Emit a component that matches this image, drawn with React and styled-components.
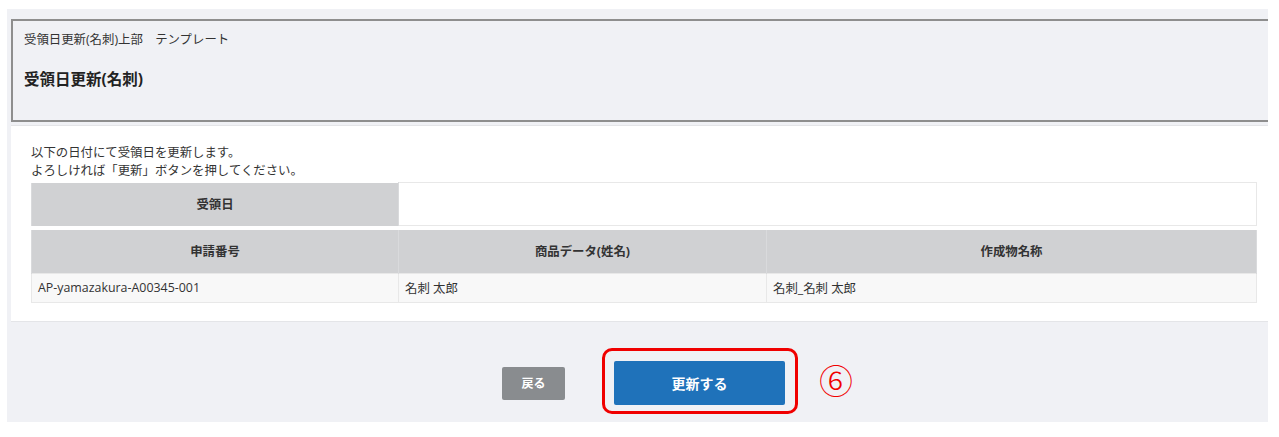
import React from 'react'
import styled, { createGlobalStyle } from 'styled-components'

const GlobalStyle = createGlobalStyle`
  body {
    margin: 0;
    background: #ffffff;
    font-family: "Open Sans", "Noto Sans CJK JP", sans-serif;
    color: #333333;
  }
`

const Page = styled.div`
  padding: 9px 11px 16px 7px;
`
const Frame = styled.div`
  width: 1261px;
  background: #f0f1f5;
  padding-top: 10px;
`
const Header = styled.div`
  margin-left: 4px;
  height: 103px;
  border: 2px solid #8e8e8e;
  border-right: none;
  padding: 10px 0 0 11px;
  box-sizing: border-box;
`
const Breadcrumb = styled.div`
  font-size: 12.4px;
  line-height: 18px;
  color: #333;
`
const Title = styled.h1`
  margin: 20px 0 0;
  font-size: 15.5px;
  line-height: 20px;
  font-weight: bold;
  color: #222;
`
const Panel = styled.div`
  margin: 3px 0 0 4px;
  background: #ffffff;
  border-top: 1px solid #e4e5e8;
  border-bottom: 1px solid #e4e5e8;
  padding: 18px 11px 18px 20px;
`
const Lead = styled.p`
  margin: 0 0 2px;
  font-size: 12.4px;
  line-height: 18px;
  color: #333;
`
const Table = styled.table`
  width: 1226px;
  border-collapse: collapse;
  table-layout: fixed;
  margin-top: ${(p) => p.$gap || 0}px;
  font-size: 12.4px;
`
const Th = styled.th`
  background: #d0d1d3;
  height: 43px;
  padding: 0;
  font-weight: bold;
  color: #333;
  text-align: center;
  border-left: 1px solid #d9dadc;
  border-right: 1px solid #d9dadc;
  box-sizing: border-box;
`
const InputCell = styled.td`
  background: #fff;
  border: 1px solid #e8e8e8;
  height: 43px;
  box-sizing: border-box;
`
const Td = styled.td`
  background: #f8f8f8;
  border: 1px solid #e8e8e8;
  border-left: ${(p) => (p.$inner ? '1px solid #f8f8f8' : '1px solid #e8e8e8')};
  height: 29px;
  padding: 0 6px;
  color: #333;
  box-sizing: border-box;
`
const Footer = styled.div`
  height: 100px;
  display: flex;
  align-items: flex-start;
  padding: 26px 0 0 495px;
  box-sizing: border-box;
`
const Button = styled.button`
  border: none;
  color: #fff;
  font-family: inherit;
  font-weight: bold;
  cursor: pointer;
  border-radius: 2px;
  background: ${(p) => (p.$primary ? '#1f72ba' : '#898c8f')};
  width: ${(p) => (p.$primary ? 171 : 63)}px;
  height: ${(p) => (p.$primary ? 44 : 33)}px;
  font-size: ${(p) => (p.$primary ? 14 : 12)}px;
  margin-top: ${(p) => (p.$primary ? 0 : 19)}px;
  padding: 0;
`
const Highlight = styled.div`
  margin-left: 37px;
  border: 3px solid #f00000;
  border-radius: 10px;
  padding: 10px 10px 6px 9px;
  display: flex;
`
const Marker = styled.span`
  margin: 15px 0 0 21px;
  color: #f00000;
  font-size: 34px;
  line-height: 34px;
  font-weight: 300;
  font-family: "Noto Sans CJK JP", sans-serif;
`

export default function App() {
  return (
    <Page>
      <GlobalStyle />
      <Frame>
        <Header>
          <Breadcrumb>受領日更新(名刺)上部　テンプレート</Breadcrumb>
          <Title>受領日更新(名刺)</Title>
        </Header>
        <Panel>
          <Lead>
            以下の日付にて受領日を更新します。
            <br />
            よろしければ「更新」ボタンを押してください。
          </Lead>
          <Table>
            <colgroup>
              <col style={{ width: 367 }} />
              <col />
            </colgroup>
            <tbody>
              <tr>
                <Th>受領日</Th>
                <InputCell />
              </tr>
            </tbody>
          </Table>
          <Table $gap={4}>
            <colgroup>
              <col style={{ width: 367 }} />
              <col style={{ width: 368 }} />
              <col />
            </colgroup>
            <thead>
              <tr>
                <Th>申請番号</Th>
                <Th>商品データ(姓名)</Th>
                <Th>作成物名称</Th>
              </tr>
            </thead>
            <tbody>
              <tr>
                <Td>AP-yamazakura-A00345-001</Td>
                <Td $inner>名刺 太郎</Td>
                <Td $inner>名刺_名刺 太郎</Td>
              </tr>
            </tbody>
          </Table>
        </Panel>
        <Footer>
          <Button>戻る</Button>
          <Highlight>
            <Button $primary>更新する</Button>
          </Highlight>
          <Marker>⑥</Marker>
        </Footer>
      </Frame>
    </Page>
  )
}
